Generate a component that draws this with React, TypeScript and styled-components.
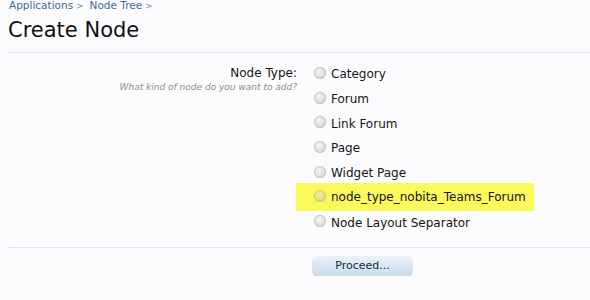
import React from "react";
import styled, { createGlobalStyle } from "styled-components";

const Global = createGlobalStyle`
  html, body {
    margin: 0;
    padding: 0;
    background: #fcfcff;
  }
  body {
    font-family: "DejaVu Sans", Verdana, sans-serif;
    color: #141414;
  }
`;

const Page = styled.div`
  padding: 0 0 0 8px;
`;

const Breadcrumb = styled.div`
  display: flex;
  font-size: 10.5px;
  line-height: 14px;
  margin: -2px 0 0 1px;
  color: #3f6b94;

  span::after {
    content: " >";
    font-size: 9px;
    color: #7a8b99;
  }

  span + span {
    margin-left: 6px;
  }
`;

const Title = styled.h1`
  margin: 3px 0 0 0;
  font-size: 21px;
  font-weight: normal;
  line-height: 28px;
  color: #101010;
`;

const Divider = styled.hr`
  margin: 8px 0 0 0;
  border: 0;
  border-top: 1px solid #d5e8f6;
  height: 0;
`;

const Form = styled.div`
  display: grid;
  grid-template-columns: 289px 1fr;
  column-gap: 17px;
  padding-top: 9px;
`;

const Label = styled.div`
  text-align: right;
  font-size: 12px;
  line-height: 16px;
  padding-top: 3px;
`;

const Hint = styled.div`
  text-align: right;
  font-size: 9px;
  font-style: italic;
  color: #8c8c8c;
  line-height: 13px;
`;

const Options = styled.ul`
  list-style: none;
  margin: 0;
  padding: 0;
  display: flex;
  flex-direction: column;
`;

const Option = styled.li<{ $highlight?: boolean }>`
  display: flex;
  align-items: center;
  gap: 5px;
  height: 24.7px;
  font-size: 12px;
  box-sizing: border-box;
  ${(p) =>
    p.$highlight
      ? `
    height: 28px;
    margin: -2px 0 -1px -18px;
    padding-left: 18px;
    width: 238px;
    background: #fbf95c;
  `
      : ""}
`;

const Radio = styled.span<{ $highlight?: boolean }>`
  width: 12px;
  height: 12px;
  border-radius: 50%;
  flex: none;
  margin-top: -3px;
  background: ${(p) =>
    p.$highlight
      ? "radial-gradient(circle at 40% 35%, #f2f0a0, #d4d27a)"
      : "radial-gradient(circle at 40% 35%, #f4f4f4, #cfcfcf)"};
  box-shadow: inset 0 0 0 1px ${(p) => (p.$highlight ? "#cfcc6a" : "#c4c4c4")};
`;

const Footer = styled.div`
  margin-top: 12px;
  border-top: 1px solid #d5e8f6;
  padding: 6px 0 0 305px;
`;

const Button = styled.button`
  width: 99px;
  height: 21px;
  border: 0;
  border-radius: 6px;
  font-family: inherit;
  font-size: 11px;
  color: #1e2a35;
  background: linear-gradient(#ecf4fb, #c6dcee);
  box-shadow: 0 1px 2px rgba(0, 0, 0, 0.35), inset 0 1px 0 #ffffff;
  padding: 0;
`;

const options = [
  "Category",
  "Forum",
  "Link Forum",
  "Page",
  "Widget Page",
  "node_type_nobita_Teams_Forum",
  "Node Layout Separator",
];

export default function App() {
  return (
    <Page>
      <Global />
      <Breadcrumb>
        <span>Applications</span>
        <span>Node Tree</span>
      </Breadcrumb>
      <Title>Create Node</Title>
      <Divider />
      <Form>
        <div>
          <Label>Node Type:</Label>
          <Hint>What kind of node do you want to add?</Hint>
        </div>
        <Options>
          {options.map((o) => {
            const hl = o.startsWith("node_type");
            return (
              <Option key={o} $highlight={hl}>
                <Radio $highlight={hl} />
                {o}
              </Option>
            );
          })}
        </Options>
      </Form>
      <Footer>
        <Button>Proceed...</Button>
      </Footer>
    </Page>
  );
}
